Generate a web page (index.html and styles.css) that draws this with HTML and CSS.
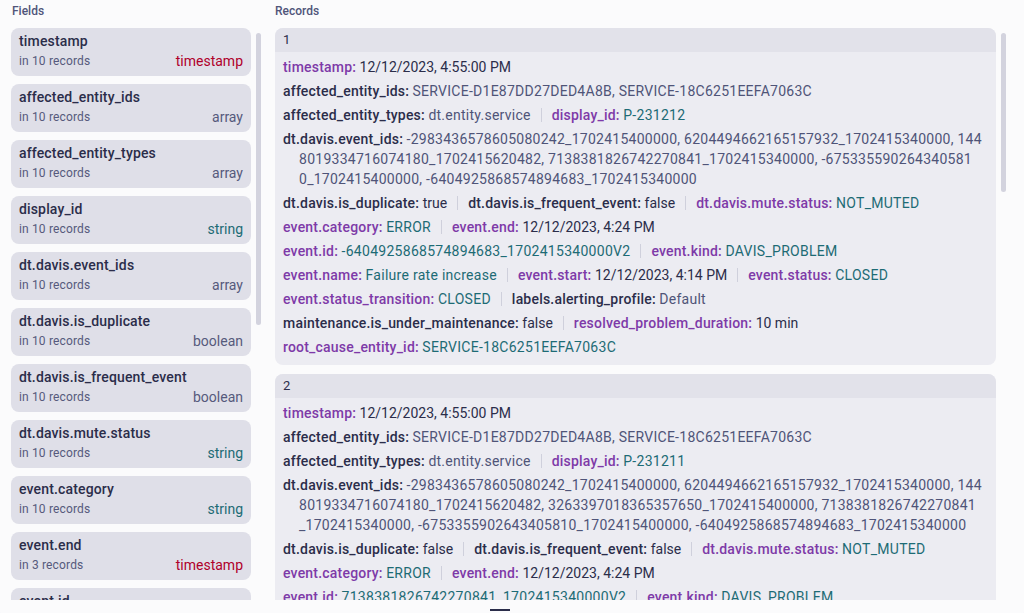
FILE: index.html
```html
<!DOCTYPE html>
<html lang="en">
<head>
<meta charset="utf-8">
<title>Fields and Records</title>
<link rel="stylesheet" href="styles.css">
</head>
<body>
<div class="app">
  <section class="fields-pane">
    <div class="pane-title">Fields</div>
    <div class="pane-body">
      <div class="field-list">
        <div class="field-card"><div class="field-name">timestamp</div><div class="field-meta"><span>in 10 records</span><span class="type t-timestamp">timestamp</span></div></div>
        <div class="field-card"><div class="field-name">affected_entity_ids</div><div class="field-meta"><span>in 10 records</span><span class="type">array</span></div></div>
        <div class="field-card"><div class="field-name">affected_entity_types</div><div class="field-meta"><span>in 10 records</span><span class="type">array</span></div></div>
        <div class="field-card"><div class="field-name">display_id</div><div class="field-meta"><span>in 10 records</span><span class="type t-string">string</span></div></div>
        <div class="field-card"><div class="field-name">dt.davis.event_ids</div><div class="field-meta"><span>in 10 records</span><span class="type">array</span></div></div>
        <div class="field-card"><div class="field-name">dt.davis.is_duplicate</div><div class="field-meta"><span>in 10 records</span><span class="type">boolean</span></div></div>
        <div class="field-card"><div class="field-name">dt.davis.is_frequent_event</div><div class="field-meta"><span>in 10 records</span><span class="type">boolean</span></div></div>
        <div class="field-card"><div class="field-name">dt.davis.mute.status</div><div class="field-meta"><span>in 10 records</span><span class="type t-string">string</span></div></div>
        <div class="field-card"><div class="field-name">event.category</div><div class="field-meta"><span>in 10 records</span><span class="type t-string">string</span></div></div>
        <div class="field-card"><div class="field-name">event.end</div><div class="field-meta"><span>in 3 records</span><span class="type t-timestamp">timestamp</span></div></div>
        <div class="field-card"><div class="field-name">event.id</div><div class="field-meta"><span>in 10 records</span><span class="type t-string">string</span></div></div>
      </div>
      <div class="scrollbar"><div class="thumb thumb-fields"></div></div>
    </div>
  </section>

  <section class="records-pane">
    <div class="pane-title">Records</div>
    <div class="pane-body">
      <div class="record-list">
        <article class="record">
          <header class="record-head">1</header>
          <div class="record-body">
            <div class="row"><span class="k p">timestamp:</span> <span class="v d">12/12/2023, 4:55:00 PM</span></div>
            <div class="row"><span class="k">affected_entity_ids:</span> <span class="v g">SERVICE-D1E87DD27DED4A8B, SERVICE-18C6251EEFA7063C</span></div>
            <div class="row"><span class="k">affected_entity_types:</span> <span class="v g">dt.entity.service</span><span class="sep"></span><span class="k p">display_id:</span> <span class="v t">P-231212</span></div>
            <div class="row wrap"><span class="k">dt.davis.event_ids:</span> <span class="v g">-2983436578605080242_1702415400000, 6204494662165157932_1702415340000, 144<br>8019334716074180_1702415620482, 7138381826742270841_1702415340000, -675335590264340581<br>0_1702415400000, -6404925868574894683_1702415340000</span></div>
            <div class="row"><span class="k">dt.davis.is_duplicate:</span> <span class="v d">true</span><span class="sep"></span><span class="k">dt.davis.is_frequent_event:</span> <span class="v d">false</span><span class="sep"></span><span class="k p">dt.davis.mute.status:</span> <span class="v t">NOT_MUTED</span></div>
            <div class="row"><span class="k p">event.category:</span> <span class="v t">ERROR</span><span class="sep"></span><span class="k p">event.end:</span> <span class="v d">12/12/2023, 4:24 PM</span></div>
            <div class="row"><span class="k p">event.id:</span> <span class="v t">-6404925868574894683_1702415340000V2</span><span class="sep"></span><span class="k p">event.kind:</span> <span class="v t">DAVIS_PROBLEM</span></div>
            <div class="row"><span class="k p">event.name:</span> <span class="v t">Failure rate increase</span><span class="sep"></span><span class="k p">event.start:</span> <span class="v d">12/12/2023, 4:14 PM</span><span class="sep"></span><span class="k p">event.status:</span> <span class="v t">CLOSED</span></div>
            <div class="row"><span class="k p">event.status_transition:</span> <span class="v t">CLOSED</span><span class="sep"></span><span class="k">labels.alerting_profile:</span> <span class="v g">Default</span></div>
            <div class="row"><span class="k">maintenance.is_under_maintenance:</span> <span class="v d">false</span><span class="sep"></span><span class="k p">resolved_problem_duration:</span> <span class="v d">10 min</span></div>
            <div class="row"><span class="k p">root_cause_entity_id:</span> <span class="v t">SERVICE-18C6251EEFA7063C</span></div>
          </div>
        </article>
        <article class="record">
          <header class="record-head">2</header>
          <div class="record-body">
            <div class="row"><span class="k p">timestamp:</span> <span class="v d">12/12/2023, 4:55:00 PM</span></div>
            <div class="row"><span class="k">affected_entity_ids:</span> <span class="v g">SERVICE-D1E87DD27DED4A8B, SERVICE-18C6251EEFA7063C</span></div>
            <div class="row"><span class="k">affected_entity_types:</span> <span class="v g">dt.entity.service</span><span class="sep"></span><span class="k p">display_id:</span> <span class="v t">P-231211</span></div>
            <div class="row wrap"><span class="k">dt.davis.event_ids:</span> <span class="v g">-2983436578605080242_1702415400000, 6204494662165157932_1702415340000, 144<br>8019334716074180_1702415620482, 3263397018365357650_1702415400000, 7138381826742270841<br>_1702415340000, -6753355902643405810_1702415400000, -6404925868574894683_1702415340000</span></div>
            <div class="row"><span class="k">dt.davis.is_duplicate:</span> <span class="v d">false</span><span class="sep"></span><span class="k">dt.davis.is_frequent_event:</span> <span class="v d">false</span><span class="sep"></span><span class="k p">dt.davis.mute.status:</span> <span class="v t">NOT_MUTED</span></div>
            <div class="row"><span class="k p">event.category:</span> <span class="v t">ERROR</span><span class="sep"></span><span class="k p">event.end:</span> <span class="v d">12/12/2023, 4:24 PM</span></div>
            <div class="row"><span class="k p">event.id:</span> <span class="v t">7138381826742270841_1702415340000V2</span><span class="sep"></span><span class="k p">event.kind:</span> <span class="v t">DAVIS_PROBLEM</span></div>
            <div class="row"><span class="k p">event.name:</span> <span class="v t">Failure rate increase</span><span class="sep"></span><span class="k p">event.start:</span> <span class="v d">12/12/2023, 4:14 PM</span><span class="sep"></span><span class="k p">event.status:</span> <span class="v t">CLOSED</span></div>
          </div>
        </article>
      </div>
      <div class="scrollbar"><div class="thumb thumb-records"></div></div>
    </div>
  </section>
</div>
<div class="footer"><span class="handle"></span></div>
<div class="frame"></div>
</body>
</html>
```
FILE: styles.css
```css
* { box-sizing: border-box; }
html, body { margin: 0; padding: 0; }
body {
  background: #fbfbfc;
  font-family: Roboto, "Liberation Sans", sans-serif;
  color: #2b2d4a;
  height: 613px;
  overflow: hidden;
}
.app {
  display: grid;
  grid-template-columns: 250px 1fr;
  column-gap: 14px;
  height: 600px;
  padding-left: 11px;
  overflow: hidden;
}
.pane-title {
  font-size: 12px;
  line-height: 16px;
  padding: 3px 0 0 1px;
  height: 28px;
  color: #50557a;
  font-weight: 500;
}
.records-pane .pane-title { padding-left: 0; }
.pane-body {
  display: flex;
  gap: 5px;
  align-items: flex-start;
}
.field-list {
  width: 240px;
  flex: none;
  display: flex;
  flex-direction: column;
  gap: 8px;
}
.field-card {
  background: #dfdfe8;
  border-radius: 8px;
  height: 48px;
  padding: 4px 8px 0 8px;
}
.field-name {
  font-size: 14px;
  font-weight: 500;
  line-height: 18px;
  color: #2b2d4a;
  letter-spacing: 0.15px;
}
.field-meta {
  display: flex;
  justify-content: space-between;
  font-size: 12px;
  line-height: 20px;
  color: #565a7c;
  margin-top: 1px;
  letter-spacing: 0.15px;
}
.type { font-size: 14px; letter-spacing: 0; }
.t-timestamp { color: #b0002b; }
.t-string { color: #1d6b75; }
.scrollbar {
  width: 5px;
  flex: none;
  padding-top: 5px;
}
.thumb {
  width: 5px;
  border-radius: 3px;
  background: #d3d3de;
}
.thumb-fields { height: 292px; }
.thumb-records { height: 159px; }
.record-list {
  width: 721px;
  flex: none;
  display: flex;
  flex-direction: column;
  gap: 9px;
}
.record {
  border-radius: 8px;
  overflow: hidden;
  background: #ececf2;
}
.record-head {
  background: #e2e2ea;
  height: 24px;
  line-height: 24px;
  font-size: 13px;
  padding-left: 8px;
  color: #2b2d4a;
}
.record-body {
  padding: 3px 12px 6px 8px;
  font-size: 14px;
}
.row {
  line-height: 20px;
  padding: 2px 0;
  white-space: nowrap;
}
.row.wrap {
  padding-left: 16px;
  text-indent: -16px;
}
.k { font-weight: 500; color: #2b2d4a; letter-spacing: 0.2px; }
.k.p { color: #7e3aa8; }
.v.d { color: #2b2d4a; }
.v.g { color: #4f5478; letter-spacing: 0.26px; }
.v.t { color: #1d6b75; letter-spacing: 0.28px; }
.sep {
  display: inline-block;
  width: 1px;
  height: 14px;
  background: #cfd0dc;
  margin: 0 10px;
  vertical-align: -2px;
}
.footer {
  height: 13px;
  display: flex;
  justify-content: center;
  padding-top: 9px;
}
.handle {
  width: 20px;
  height: 2px;
  background: #2b2d4a;
  margin-right: 24px;
}
.frame {
  position: fixed;
  left: -6px;
  right: -6px;
  bottom: -9px;
  height: 60px;
  border: 3px solid #4048d0;
  border-radius: 0 0 18px 18px;
  border-top: none;
  pointer-events: none;
}
```
